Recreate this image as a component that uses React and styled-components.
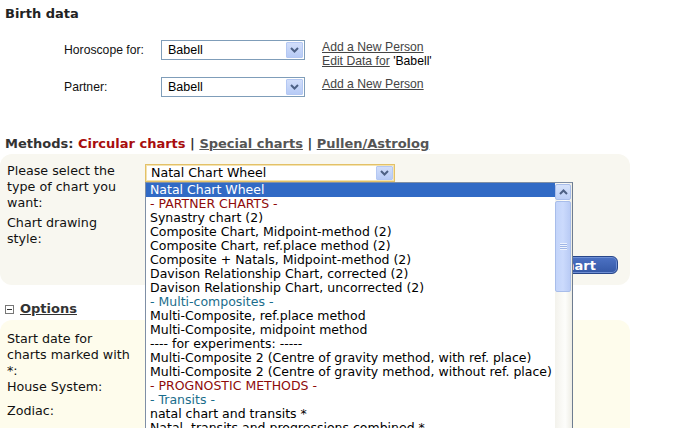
import React from "react";
import styled, { createGlobalStyle } from "styled-components";

const GlobalStyle = createGlobalStyle`
  html, body {
    margin: 0;
    padding: 0;
    background: #fff;
  }
  body {
    font-family: "DejaVu Sans", Verdana, sans-serif;
    color: #000;
  }
`;

const chartTypes = [
  { label: "Natal Chart Wheel", selected: true },
  { label: "- PARTNER CHARTS -", kind: "red" },
  { label: "Synastry chart (2)" },
  { label: "Composite Chart, Midpoint-method (2)" },
  { label: "Composite Chart, ref.place method (2)" },
  { label: "Composite + Natals, Midpoint-method (2)" },
  { label: "Davison Relationship Chart, corrected (2)" },
  { label: "Davison Relationship Chart, uncorrected (2)" },
  { label: "- Multi-composites -", kind: "teal" },
  { label: "Multi-Composite, ref.place method" },
  { label: "Multi-Composite, midpoint method" },
  { label: "---- for experiments: -----" },
  { label: "Multi-Composite 2 (Centre of gravity method, with ref. place)" },
  { label: "Multi-Composite 2 (Centre of gravity method, without ref. place)" },
  { label: "- PROGNOSTIC METHODS -", kind: "red" },
  { label: "- Transits -", kind: "teal" },
  { label: "natal chart and transits *" },
  { label: "Natal, transits and progressions combined *" },
  { label: "Transits to progressions *" },
];

const Chevron = ({ color = "#4d6185" }) => (
  <svg width="9" height="6" viewBox="0 0 9 6">
    <polyline
      points="1,1 4.5,4.5 8,1"
      fill="none"
      stroke={color}
      strokeWidth="2"
    />
  </svg>
);

const App = () => {
  return (
    <>
      <GlobalStyle />
      <Page>
        <SectionTitle>Birth data</SectionTitle>

        <BirthRow $top={18}>
          <FieldLabel>Horoscope for:</FieldLabel>
          <Combo $width={144} $height={20}>
            <ComboText>Babell</ComboText>
            <ComboButton $height={16}>
              <Chevron />
            </ComboButton>
          </Combo>
          <LinkCol>
            <PlainLink>Add a New Person</PlainLink>
            <span>
              <PlainLink>Edit Data for</PlainLink> 'Babell'
            </span>
          </LinkCol>
        </BirthRow>

        <BirthRow $top={9}>
          <FieldLabel>Partner:</FieldLabel>
          <Combo $width={144} $height={20}>
            <ComboText>Babell</ComboText>
            <ComboButton $height={16}>
              <Chevron />
            </ComboButton>
          </Combo>
          <LinkCol>
            <PlainLink>Add a New Person</PlainLink>
          </LinkCol>
        </BirthRow>

        <Methods>
          Methods: <ActiveMethod>Circular charts</ActiveMethod> |{" "}
          <MethodLink>Special charts</MethodLink> |{" "}
          <MethodLink>Pullen/Astrolog</MethodLink>
        </Methods>

        <Panel $bg="#f8f7f0" $mt={2} $pt={9} $pb={11}>
          <PanelGrid>
            <PanelLabel>
              Please select the
              <br />
              type of chart you
              <br />
              want:
            </PanelLabel>
            <SelectWrap>
              <TypeSelect>
                <TypeText>Natal Chart Wheel</TypeText>
                <ComboButton $height={14}>
                  <Chevron />
                </ComboButton>
              </TypeSelect>
              <DropList>
                <Options>
                  {chartTypes.map((item, i) => (
                    <OptionRow key={i} $selected={item.selected} $kind={item.kind}>
                      {item.label}
                    </OptionRow>
                  ))}
                </Options>
                <ScrollBar>
                  <ScrollUp>
                    <svg width="9" height="6" viewBox="0 0 9 6">
                      <polyline
                        points="1,5 4.5,1.5 8,5"
                        fill="none"
                        stroke="#4d6185"
                        strokeWidth="2"
                      />
                    </svg>
                  </ScrollUp>
                  <ScrollThumb>
                    <Grip />
                  </ScrollThumb>
                </ScrollBar>
              </DropList>
            </SelectWrap>
            <PanelLabel $top={4}>
              Chart drawing
              <br />
              style:
            </PanelLabel>
            <div />
          </PanelGrid>
          <ButtonRow>
            <ChartButton>Show Chart</ChartButton>
          </ButtonRow>
        </Panel>

        <OptionsHeading>
          <Collapse />
          <span>Options</span>
        </OptionsHeading>

        <Panel $bg="#fefcec" $mt={3} $pt={11} $pb={20}>
          <PanelLabel>
            Start date for
            <br />
            charts marked with
            <br />
            *:
          </PanelLabel>
          <PanelLabel>House System:</PanelLabel>
          <PanelLabel $top={8}>Zodiac:</PanelLabel>
        </Panel>
      </Page>
    </>
  );
};

const Page = styled.div`
  width: 679px;
  height: 428px;
  overflow: hidden;
`;

const SectionTitle = styled.h2`
  margin: 0;
  padding: 6px 0 0 5px;
  font-size: 13px;
  line-height: 16px;
  font-weight: bold;
  color: #222;
`;

const BirthRow = styled.div`
  display: grid;
  grid-template-columns: 97px 161px auto;
  align-items: start;
  margin: ${(p) => p.$top}px 0 0 64px;
  font-family: "Liberation Sans", Arial, sans-serif;
  font-size: 12.2px;
`;

const FieldLabel = styled.div`
  line-height: 20px;
  color: #111;
`;

const Combo = styled.div`
  box-sizing: border-box;
  width: ${(p) => p.$width}px;
  height: ${(p) => p.$height}px;
  border: 1px solid #7f9db9;
  background: #fff;
  display: flex;
  align-items: center;
  padding: 1px;
`;

const ComboText = styled.span`
  flex: 1;
  padding-left: 5px;
  font-size: 12.5px;
  color: #000;
`;

const ComboButton = styled.span`
  box-sizing: border-box;
  width: 17px;
  height: ${(p) => p.$height}px;
  background: linear-gradient(#d2defa, #b7cbf6);
  border: 1px solid #b4c8f3;
  border-radius: 1px;
  display: flex;
  align-items: center;
  justify-content: center;
`;

const LinkCol = styled.div`
  display: flex;
  flex-direction: column;
  line-height: 14px;
  color: #000;
`;

const PlainLink = styled.a`
  color: #444;
  text-decoration: underline;
`;

const Methods = styled.div`
  margin: 39px 0 0 5px;
  font-size: 13px;
  line-height: 16px;
  font-weight: bold;
  color: #333;
`;

const ActiveMethod = styled.span`
  color: #a80d0d;
`;

const MethodLink = styled.a`
  color: #555;
  text-decoration: underline;
`;

const Panel = styled.div`
  box-sizing: border-box;
  width: 630px;
  margin-top: ${(p) => p.$mt}px;
  padding: ${(p) => p.$pt}px 12px ${(p) => p.$pb}px 7px;
  background: ${(p) => p.$bg};
  border-radius: 12px;
`;

const PanelGrid = styled.div`
  display: grid;
  grid-template-columns: 138px 1fr;
  align-items: start;
`;

const PanelLabel = styled.div`
  font-size: 12.7px;
  line-height: 16px;
  color: #111;
  margin-top: ${(p) => p.$top || 0}px;
`;

const SelectWrap = styled.div`
  position: relative;
  margin-top: 1px;
`;

const TypeSelect = styled.div`
  box-sizing: border-box;
  width: 250px;
  height: 18px;
  border: 1px solid #e3c168;
  box-shadow: inset 0 0 0 1px #f4e3b0;
  background: #fff;
  display: flex;
  align-items: center;
  padding: 1px;
`;

const TypeText = styled.span`
  flex: 1;
  padding-left: 4px;
  font-size: 12.6px;
  line-height: 14px;
`;

const DropList = styled.div`
  position: absolute;
  top: 100%;
  left: 0;
  z-index: 2;
  box-sizing: border-box;
  width: 428px;
  height: 270px;
  border: 1px solid #7f8fa6;
  border-right-color: #6d7c90;
  background: #fff;
  display: flex;
`;

const Options = styled.div`
  flex: 1;
  overflow: hidden;
`;

const OptionRow = styled.div`
  padding-left: 4px;
  font-size: 12.5px;
  line-height: 14px;
  white-space: nowrap;
  background: ${(p) => (p.$selected ? "#316ac5" : "transparent")};
  color: ${(p) =>
    p.$selected
      ? "#fff"
      : p.$kind === "red"
      ? "#8e0a0a"
      : p.$kind === "teal"
      ? "#1b6d8c"
      : "#000"};
`;

const ScrollBar = styled.div`
  width: 17px;
  background: linear-gradient(90deg, #f3f2ec, #fdfdfb 60%, #eeede5);
  display: flex;
  flex-direction: column;
  padding-top: 1px;
`;

const ScrollUp = styled.div`
  box-sizing: border-box;
  height: 16px;
  margin: 0 1px 0 0;
  background: linear-gradient(#d6e2fb, #bccff7);
  border: 1px solid #a8bdea;
  border-radius: 2px;
  display: flex;
  align-items: center;
  justify-content: center;
`;

const ScrollThumb = styled.div`
  box-sizing: border-box;
  height: 91px;
  margin: 1px 1px 0 0;
  background: linear-gradient(90deg, #c3d4fa, #cbdafc 50%, #b9cbf5);
  border: 1px solid #a8bdea;
  border-radius: 2px;
  display: flex;
  align-items: center;
  justify-content: center;
`;

const Grip = styled.span`
  width: 7px;
  height: 7px;
  background: repeating-linear-gradient(
    #eef3fe 0 1px,
    #9fb5e6 1px 2px
  );
`;

const ButtonRow = styled.div`
  display: flex;
  justify-content: flex-end;
  margin-top: 9px;
`;

const ChartButton = styled.button`
  box-sizing: border-box;
  height: 18px;
  padding: 0 21px 0 12px;
  border: 1px solid #28478a;
  border-radius: 6px;
  background: linear-gradient(#4c72c4, #3458a6);
  box-shadow: inset 0 0 0 1px #6f8fd4;
  color: #fff;
  font-family: "DejaVu Sans", Verdana, sans-serif;
  font-size: 13px;
  font-weight: bold;
  line-height: 15px;
`;

const OptionsHeading = styled.div`
  display: flex;
  align-items: center;
  gap: 6px;
  margin: 16px 0 0 5px;
  font-size: 13px;
  line-height: 16px;
  font-weight: bold;
  color: #333;
  span {
    text-decoration: underline;
  }
`;

const Collapse = styled.i`
  position: relative;
  box-sizing: border-box;
  width: 9px;
  height: 9px;
  border: 1px solid #777;
  background: #fff;
  &::after {
    content: "";
    position: absolute;
    left: 1px;
    right: 1px;
    top: 3px;
    height: 1px;
    background: #333;
  }
`;

export default App;
